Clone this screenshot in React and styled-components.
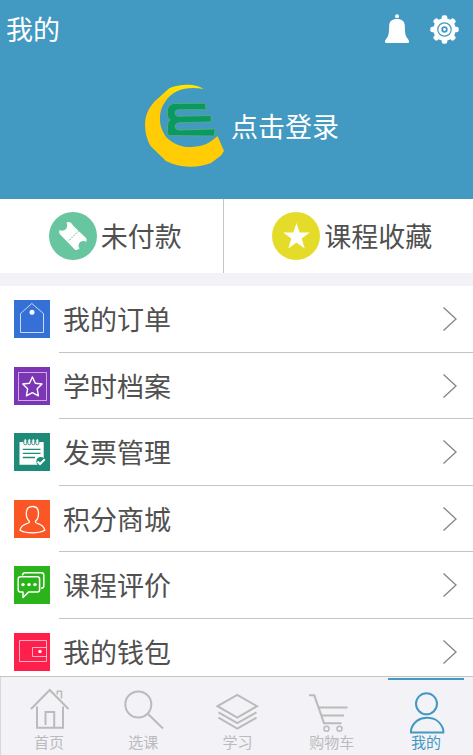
import React from 'react'
import styled, { createGlobalStyle } from 'styled-components'

const colors = {
    primary: '#4299c1',
    band: '#f2f2f7',
    text: '#505050',
    line: '#c4c4c4',
    muted: '#bbbbbb',
};

const GlobalStyle = createGlobalStyle`
    * {
        box-sizing: border-box;
    }
    body {
        margin: 0;
        background: #ffffff;
        font-family: "Noto Sans CJK SC", sans-serif;
    }
    button {
        border: 0;
        padding: 0;
        background: none;
        font: inherit;
        color: inherit;
        cursor: pointer;
    }
    a {
        color: inherit;
        text-decoration: none;
    }
    svg {
        display: block;
        flex: none;
        overflow: visible;
    }
`;

const Page = styled.div`
    display: flex;
    flex-direction: column;
    min-height: 100vh;
    padding-bottom: 70px;
`;

const Header = styled.header`
    background: ${colors.primary};
    color: #ffffff;
`;

const TopBar = styled.div`
    display: flex;
    align-items: center;
    height: 58px;
    padding: 0 14px 0 6px;
`;

const Title = styled.h1`
    flex: 1;
    margin: 0;
    font-size: 27px;
    font-weight: 400;
    line-height: 40px;
`;

const IconButton = styled.button`
    margin-left: 21px;
`;

const LoginButton = styled.button`
    display: flex;
    align-items: center;
    justify-content: center;
    gap: 7px;
    width: 100%;
    height: 141px;
    padding: 0 0 5px 10px;
    font-size: 27px;
    line-height: 40px;
`;

const QuickBar = styled.nav`
    display: flex;
    height: 87px;
    border-bottom: 13px solid ${colors.band};
`;

const QuickLink = styled.a`
    flex: 1 1 auto;
    display: flex;
    align-items: center;
    justify-content: center;
    gap: 4px;
    padding-left: 8px;
    font-size: 27px;
    line-height: 40px;
    color: ${colors.text};

    & + & {
        border-left: 1px solid ${colors.line};
    }
`;

const Menu = styled.ul`
    flex: 1;
    display: grid;
    grid-auto-rows: minmax(60px, 1fr);
    margin: 0;
    padding: 0;
    list-style: none;
`;

const MenuLink = styled.a`
    display: flex;
    align-items: center;
    gap: 9px;
    height: 100%;
    padding-left: 14px;
    color: ${colors.text};
`;

const MenuIcon = styled.svg`
    background: ${props => props.$color};
    fill: none;
    stroke: #ffffff;
`;

const MenuBody = styled.span`
    flex: 1;
    align-self: stretch;
    display: flex;
    align-items: center;
    justify-content: space-between;
    padding: 1px 16px 0 4px;
    border-bottom: 1px solid ${colors.line};
    font-size: 27px;
    line-height: 40px;
`;

const TabBar = styled.nav`
    position: fixed;
    left: 0;
    right: 0;
    bottom: 0;
    display: grid;
    grid-template-columns: repeat(5, 1fr);
    height: 79px;
    padding-left: 2px;
    background: ${colors.band};
    border-top: 1px solid ${colors.line};
    box-shadow: inset 1px 0 0 #d8d8dc;
`;

const TabLink = styled.a`
    position: relative;
    display: flex;
    flex-direction: column;
    align-items: center;
    padding-top: 11px;
    font-size: 15px;
    line-height: 16px;
    color: ${props => props.$active ? colors.primary : colors.muted};

    &::before {
        content: '';
        display: ${props => props.$active ? 'block' : 'none'};
        position: absolute;
        top: 1px;
        left: 9px;
        right: 9px;
        height: 2px;
        background: ${colors.primary};
    }
`;

const TabIcon = styled.svg`
    fill: none;
    stroke: currentColor;
    stroke-width: 2;
`;

const Bell = () => (
    <svg width="24" height="30" viewBox="0 0 24 30" fill="#ffffff">
        <circle cx="12" cy="2.2" r="2" />
        <path d="M12 5C17 5 19.6 7.200 19.800 11.500C20 17 20 20 21.200 22.500C22.500 24.500 24 26 24 27.500C24 28.500 23.500 29 22.500 29H1.500C.5 29 0 28.500 0 27.500C0 26 1.500 24.500 2.800 22.500C4 20 4 17 4.200 11.500C4.400 7.200 7 5 12 5Z" />
    </svg>
);

const Gear = () => (
    <svg width="29" height="29" viewBox="0 0 29 29">
        <g fill="#ffffff">
            <circle cx="14.500" cy="14.500" r="11.200" />
            {[0, 45, 90, 135, 180, 225, 270, 315].map((angle) => (
                <rect
                    key={angle}
                    x="11.700" y="0.300" width="5.600" height="7" rx="2"
                    transform={`rotate(${angle} 14.5 14.5)`}
                />
            ))}
        </g>
        <circle cx="14.500" cy="14.500" r="6.700" fill="none" stroke={colors.primary} strokeWidth="1.200" />
        <circle cx="14.500" cy="14.500" r="2.300" fill="#ffffff" stroke={colors.primary} strokeWidth="1.800" />
    </svg>
);

const Logo = () => (
    <svg width="80" height="84" viewBox="0 0 80 84">
        <defs>
            <linearGradient id="moon" x1="0" y1="0" x2="0" y2="1">
                <stop offset="0" stopColor="#ffe800" />
                <stop offset="0.2" stopColor="#ffcc05" />
            </linearGradient>
        </defs>
        <path
            fill="url(#moon)"
            d="M59.700 4.900C54 1.500 48 .4 42 .8C35 1.300 29 2.500 25 4.500L10 18C4 25 1 32 1 41C1 48 3 56 6.500 62L22 77C30 81 38 83 47 82.700C54 82.500 61 81.500 67 79L77 71.500L80 67L73.500 52C69 56 64 60 58 61.500C51 63 45 63.500 39 62.500C32 60.500 27 58 22.500 53.500C18 47 16 42 16 35C16 28 17.500 23 21 18C24 13 28 9.500 33 7.200C41 3.500 50 3.500 59.700 4.900Z"
        />
        <path
            fill="#089a61"
            stroke="#62ab78"
            strokeWidth="0.800"
            d="M29.500 19.500L61.500 19.300Q61 22.500 62.300 25.700H34Q31 26 31 29Q31 32 34 32.300L67.300 31.500Q66.500 34.500 67.600 37.800L34.500 38.800Q31 39.500 31 42.500Q31 45.500 34.500 46L71.500 45Q70 48.500 70.500 52L26.500 51.600Q23.500 51.500 23.500 47V42Q23.500 38 26 35.500Q23 34 23.300 29Q23 21 29.500 19.500Z"
        />
    </svg>
);

const TicketBadge = () => (
    <svg width="48" height="48" viewBox="0 0 48 48">
        <circle cx="24" cy="24" r="24" fill="#67c5a0" />
        <path
            fill="#ffffff"
            d="M17.500 10.800Q19.500 9.400 22 10.800L24.500 14L37 26Q38.300 27.800 37.300 29.700Q33.500 27.800 31 30.300Q28.300 33.300 30.500 36.500L28.500 37.800Q27 38.500 25.500 37.200L10.700 22Q9.500 20 10.700 18Q14 19.500 16.500 17.500Q19.300 14.500 17.500 10.800Z"
        />
        <path d="M30 18.500L19.500 29" stroke="#67c5a0" strokeWidth="1" strokeDasharray="2 1" />
    </svg>
);

const StarBadge = () => (
    <svg width="48" height="48" viewBox="0 0 48 48">
        <circle cx="24" cy="24" r="24" fill="#e5dc29" />
        <path
            fill="#ffffff"
            d="M24.500 11L27.700 20.500L37.800 20.600L29.700 26.600L32.700 36.500L24.500 30.600L16.300 36.500L19.300 26.600L11.200 20.600L21.300 20.500Z"
        />
    </svg>
);

const Chevron = () => (
    <svg width="14" height="24" viewBox="0 0 14 24" fill="none" stroke="#858585" strokeWidth="1.300">
        <path d="M.5 .5L13 12L.5 23.500" />
    </svg>
);

const menuItems = [
    {
        label: '我的订单',
        color: '#3470d6',
        icon: (
            <>
                <path d="M6.500 13.500L17.800 3.500L29.500 13.500V32.500H6.500Z" strokeOpacity="0.750" />
                <circle cx="18" cy="12.300" r="2.500" fill="#ffffff" stroke="none" />
            </>
        ),
    },
    {
        label: '学时档案',
        color: '#7b35b5',
        icon: (
            <>
                <rect x="4.500" y="5.500" width="28" height="28" strokeOpacity="0.600" />
                <path
                    d="M18.400 10L21.300 16.200L28 17L23.200 21.800L24.400 28.800L18.400 25.600L12.400 28.800L13.600 21.800L8.800 17L15.500 16.200Z"
                    strokeWidth="1.400" strokeLinejoin="round"
                />
            </>
        ),
    },
    {
        label: '发票管理',
        color: '#1f8a78',
        icon: (
            <>
                <path d="M5.500 9H29.700V25L24 31.800H5.500Z" fill="#ffffff" stroke="none" />
                <path d="M8.800 16.300H26.500M8.800 20.300H26.500M8.800 24.500H21" stroke="#1f8a78" strokeWidth="1.300" />
                {[11.3, 15.3, 19.3, 23.3].map((x) => (
                    <rect
                        key={x}
                        x={x - 1.5} y="5.800" width="3" height="6" rx="1.500"
                        fill="#ffffff" stroke="#1f8a78" strokeWidth="0.900"
                    />
                ))}
                <circle cx="26.800" cy="28.500" r="4.500" fill="#1f8a78" stroke="none" />
                <path d="M23.500 28.500L26 31L30.800 26.300" strokeWidth="2" />
            </>
        ),
    },
    {
        label: '积分商城',
        color: '#fb5625',
        icon: (
            <path
                d="M15.200 21C13 19.500 12.300 16 12.300 13C12.300 9 14.500 6.500 18.400 6.500C22.300 6.500 24.500 9 24.500 13C24.500 16 23.800 19.500 21.600 21C21 22.500 22 23 24 23.600C28 24.800 30 26.500 30.800 30.200C27 32.300 23 32.800 18.400 32.800C13.800 32.800 9.800 32.300 6 30.200C6.800 26.500 8.800 24.800 12.800 23.600C14.800 23 15.800 22.500 15.200 21Z"
                strokeWidth="1.300"
            />
        ),
    },
    {
        label: '课程评价',
        color: '#2bb31b',
        icon: (
            <g strokeWidth="1.500" strokeLinejoin="round">
                <path d="M8.500 9.500Q8.500 6.700 11 6.700H27.500Q29.800 6.700 29.800 9V20Q29.800 22.300 27 22.300" />
                <path d="M6.500 10.800H23.300Q25.600 10.800 25.600 13V23.800Q25.600 26.100 23.300 26.100H14.500L9 31.500V26.100H6.500Q4.200 26.100 4.200 23.800V13Q4.200 10.800 6.500 10.800Z" />
                <g fill="#ffffff" stroke="none">
                    <circle cx="9" cy="18.600" r="1.700" />
                    <circle cx="15" cy="18.600" r="1.700" />
                    <circle cx="21" cy="18.600" r="1.700" />
                </g>
            </g>
        ),
    },
    {
        label: '我的钱包',
        color: '#ff1f4d',
        icon: (
            <>
                <path d="M5.500 7.500H32.500V28.500H5.500ZM32.500 14.500H18.500V23.500H32.500" strokeOpacity="0.650" />
                <circle cx="26" cy="18.500" r="1.700" fill="#ffffff" stroke="none" />
            </>
        ),
    },
];

const tabs = [
    {
        label: '首页',
        icon: (
            <>
                <path d="M4 21L22.700 2L41.500 21" />
                <path d="M10 18.500V39.700H36V18.500" />
                <path d="M18.500 37V24H27.200V39.500" />
                <path d="M30.300 6.500V3.300H34.500V10.500" strokeWidth="1.500" />
            </>
        ),
    },
    {
        label: '选课',
        icon: (
            <>
                <circle cx="17.300" cy="16.500" r="13" />
                <path d="M26.500 25.500L42 40.500" />
            </>
        ),
    },
    {
        label: '学习',
        icon: (
            <>
                <path d="M2.500 18.200L22.300 7L42 18.200L22.300 29.500Z" />
                <path d="M3.500 24.300L22.300 35L41.500 24.300M3.500 29.700L22.300 40.500L41.500 29.700" />
            </>
        ),
    },
    {
        label: '购物车',
        icon: (
            <>
                <path d="M-1 7.300H4.300L14 35.200H31.500" />
                <path d="M9 19.500H37.500M11.500 27.500H34" />
                <g strokeWidth="1.500">
                    <circle cx="16.500" cy="40.800" r="2.500" />
                    <circle cx="29.500" cy="40.800" r="2.500" />
                </g>
            </>
        ),
    },
    {
        label: '我的',
        active: true,
        icon: (
            <>
                <circle cx="22.500" cy="15.800" r="10.500" />
                <path d="M7 44.500V42C9 34 15.500 29.800 23 29.800C30.500 29.800 37 34 39.300 42V44.500Z" />
            </>
        ),
    },
];

const App = () => {
    return (
    <>
        <GlobalStyle />
        <Page>
            <Header>
                <TopBar>
                    <Title>我的</Title>
                    <IconButton type="button" aria-label="消息"><Bell /></IconButton>
                    <IconButton type="button" aria-label="设置"><Gear /></IconButton>
                </TopBar>
                <LoginButton type="button">
                    <Logo />
                    点击登录
                </LoginButton>
            </Header>
            <QuickBar>
                <QuickLink href="#unpaid"><TicketBadge />未付款</QuickLink>
                <QuickLink href="#favorites"><StarBadge />课程收藏</QuickLink>
            </QuickBar>
            <Menu>
                {
                    menuItems.map((item) => (
                        <li key={item.label}>
                            <MenuLink href="#menu">
                                <MenuIcon width="36" height="38" viewBox="0 0 36 38" $color={item.color}>
                                    {item.icon}
                                </MenuIcon>
                                <MenuBody>
                                    {item.label}
                                    <Chevron />
                                </MenuBody>
                            </MenuLink>
                        </li>
                    ))
                }
            </Menu>
        </Page>
        <TabBar>
            {
                tabs.map((tab) => (
                    <TabLink
                    key={tab.label}
                    href="#tab"
                    $active={tab.active}
                    >
                        <TabIcon width="44" height="46" viewBox="0 0 44 46">{tab.icon}</TabIcon>
                        {tab.label}
                    </TabLink>
                ))
            }
        </TabBar>
    </>
    );
};

export default App;
